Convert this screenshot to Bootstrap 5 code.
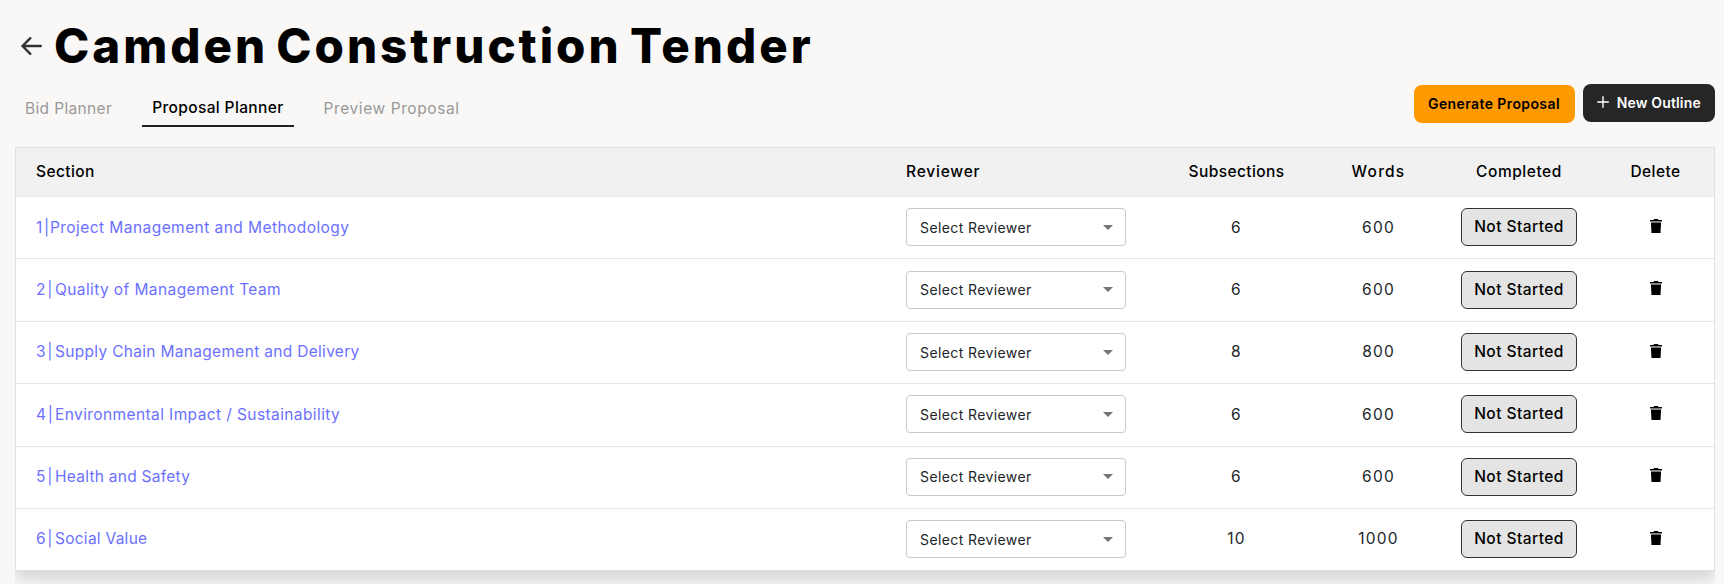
<!DOCTYPE html>
<html lang="en">
<head>
<meta charset="utf-8">
<meta name="viewport" content="width=device-width, initial-scale=1">
<title>Camden Construction Tender</title>
<link href="https://cdn.jsdelivr.net/npm/bootstrap@5.3.0/dist/css/bootstrap.min.css" rel="stylesheet">
<style>
html,body{height:100%}
body{background:#f9f8f7;font-family:Inter,"Liberation Sans",sans-serif;font-size:15.5px;color:#000;overflow:hidden}
.page-wrap{padding:17px 9px 0 15px}
.title-bar{height:58px;padding-left:6px}
.title-bar h1{font-size:47.5px;font-weight:800;line-height:58px;letter-spacing:2.95px;word-spacing:-5px;margin:0 0 0 12px;white-space:nowrap}
.tool-bar{height:72px}
.tabs .nav-link{color:#999;padding:0 10px;line-height:22px;letter-spacing:.35px;margin-top:23px}
.tabs .nav-link.active{color:#000;font-weight:500;padding-bottom:6px;border-bottom:2px solid #222;height:30px;margin:22px 20px 0 20px;letter-spacing:.37px}
.tabs .t-prev{letter-spacing:.58px}
.act{height:38px;border:0;border-radius:8px;font-size:14px;font-weight:600;padding:0;white-space:nowrap}
.act-gen{width:161px;background:#ff9900!important;color:#000;letter-spacing:.4px;margin-top:9.5px;padding-bottom:1px}
.act-new{width:132.5px;background:#262626!important;color:#fff!important;letter-spacing:.16px;margin-top:9px;padding-bottom:2px}
.shade{width:1700px;overflow:hidden;padding-bottom:30px}
.plan{table-layout:fixed;width:1700px;height:424px;background:#fff;border:1px solid #dee2e6;box-shadow:0 8px 16px rgba(0,0,0,.15);margin:0;border-collapse:separate;border-spacing:0}
.plan th,.plan td{padding:0;vertical-align:middle;text-align:center;white-space:nowrap}
.plan th{height:49px;background:#f1f1f1;font-weight:500;border-bottom:1px solid #ebebeb;letter-spacing:.4px}
.plan td{border-bottom:1px solid #e4e5e7;color:#212529;letter-spacing:1.2px;padding-bottom:1px}
.plan tr:last-child td{border-bottom:0}
.plan th:first-child,.plan td:first-child{text-align:left;padding-left:20px}
.plan th:nth-child(2),.plan td:nth-child(2){text-align:left;padding-left:20px}
.plan th:nth-child(2){letter-spacing:.8px}
.plan th:nth-child(4){letter-spacing:1.2px}
.plan th:nth-child(5){letter-spacing:.55px}
.plan a{color:#6b70ff;text-decoration:none;display:inline-flex;letter-spacing:.4px}
.plan a .num{display:inline-block;width:19px;letter-spacing:-.2px;word-spacing:-2.2px}
.plan tbody tr:first-child .num{width:14px}
.plan tbody tr:first-child a{letter-spacing:.44px}
.plan tbody tr:nth-child(3) a{letter-spacing:.31px}
.plan tbody tr:nth-child(n+5) a{letter-spacing:.26px}
.pick{width:220px;height:38px;border:1px solid #c9c9c9;border-radius:4px;background:#fff;font-size:14px;letter-spacing:.4px;padding:0 12px 0 13px;color:#212529}
.state{display:inline-block;vertical-align:middle;width:116px;height:38px;line-height:35px;border:1px solid #333;border-radius:6px;background:#e4e4e4;color:#000;font-weight:500;letter-spacing:.45px}
.bin{display:block;margin:-3px auto 0}
</style>
<script src="https://cdn.jsdelivr.net/npm/bootstrap@5.3.0/dist/js/bootstrap.bundle.min.js"></script>
</head>
<body>
<main class="page-wrap">
  <header class="title-bar d-flex align-items-center">
    <svg width="21" height="20" viewBox="0 0 21 20" fill="none" stroke="#333" stroke-width="2.4" stroke-linecap="round" stroke-linejoin="round"><path d="M19.8 10H1.5M9.3 2.2L1.5 10l7.8 7.8"/></svg>
    <h1>Camden Construction Tender</h1>
  </header>
  <div class="tool-bar d-flex justify-content-between align-items-start">
    <nav class="tabs nav flex-nowrap">
      <a class="nav-link" href="#">Bid Planner</a>
      <a class="nav-link active" href="#">Proposal Planner</a>
      <a class="nav-link t-prev" href="#">Preview Proposal</a>
    </nav>
    <div class="d-flex align-items-start">
      <button class="btn act act-gen">Generate Proposal</button>
      <button class="btn act act-new d-flex align-items-center justify-content-center ms-2"><svg class="me-2" width="12" height="12" viewBox="0 0 12 12" stroke="#fff" stroke-width="1.4" stroke-linecap="round"><path d="M6 .7v10.6M.7 6h10.6"/></svg>New Outline</button>
    </div>
  </div>
  <div class="shade">
    <table class="plan">
      <colgroup><col style="width:870px"><col style="width:271px"><col style="width:159px"><col style="width:125px"><col style="width:156px"><col></colgroup>
      <thead><tr><th>Section</th><th>Reviewer</th><th>Subsections</th><th>Words</th><th>Completed</th><th>Delete</th></tr></thead>
      <tbody id="rows"></tbody>
    </table>
  </div>
</main>
<script>
const sections = [
  ["Project Management and Methodology", 6, 600],
  ["Quality of Management Team", 6, 600],
  ["Supply Chain Management and Delivery", 8, 800],
  ["Environmental Impact / Sustainability", 6, 600],
  ["Health and Safety", 6, 600],
  ["Social Value", 10, 1000]
];
document.getElementById("rows").innerHTML = sections.map(([name, subs, words], i) => `
  <tr>
    <td><a href="#"><span class="num">${i + 1} |</span>${name}</a></td>
    <td><div class="pick d-flex align-items-center justify-content-between"><span>Select Reviewer</span><svg width="10" height="5" viewBox="0 0 10 5"><path d="M0 0h10L5 5z" fill="#757575"/></svg></div></td>
    <td>${subs}</td>
    <td>${words}</td>
    <td><span class="state">Not Started</span></td>
    <td><svg class="bin" width="12" height="14" viewBox="0 0 12 14"><path d="M0 1h3.3L4.2 0h3.6l.9 1H12v1.5H0zM.9 3.5h10.2L10.5 14h-9z"/></svg></td>
  </tr>`).join("");
</script>
</body>
</html>
